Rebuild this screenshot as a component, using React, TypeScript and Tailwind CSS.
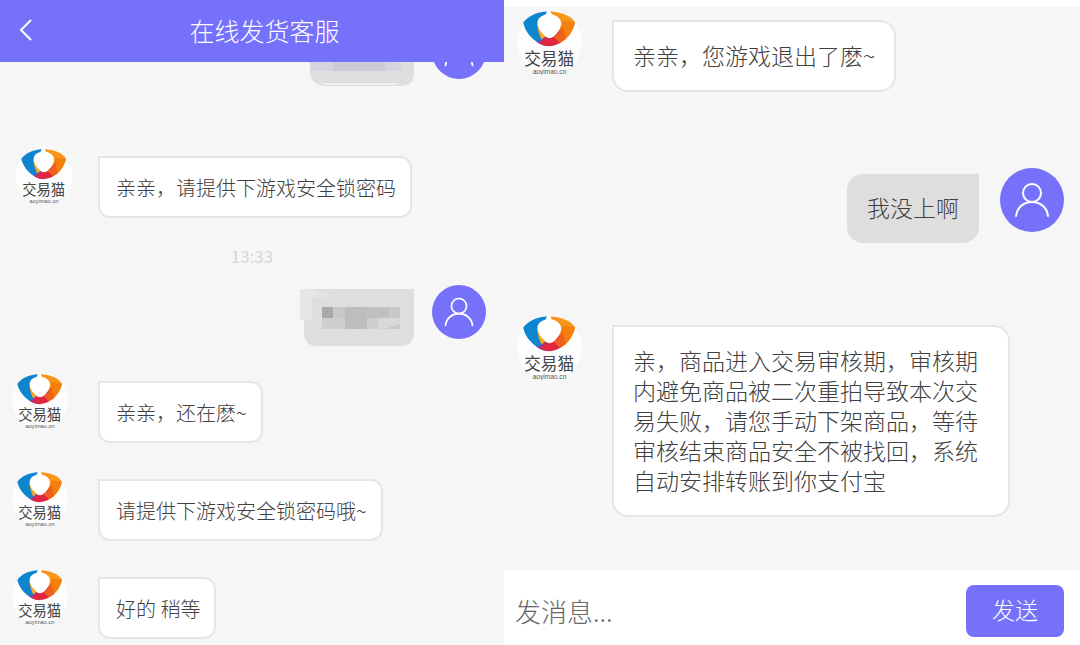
import type { ReactNode } from "react";

function CatLogo({ className }: { className: string }) {
  return (
    <svg viewBox="0 0 168 168" className={`shrink-0 ${className}`} role="img" aria-label="交易猫">
      <circle cx="84" cy="84" r="84" fill="#fdfdfd" />
      <path d="M78 4C50 5 27 17 16 33c6 24 22 44 46 55l14-16V10z" fill="#0d86cf" />
      <path d="M86 4c30 1 54 12 64 28-6 26-22 46-46 56L84 70V10z" fill="#f8961a" />
      <path d="M150 32c-4 18-13 33-26 45L104 66c10-12 15-24 14-38z" fill="#f57f0c" />
      <path d="M52 34c1 18 6 34 16 50l18-12z" fill="#f3a81f" />
      <path d="M50 82c8-1 15-6 24-14l12 26c-14 0-26-4-36-12z" fill="#8c3fa0" />
      <path d="M60 87c6-9 14-16 26-20 14-5 24-12 31-22 2 16 1 30-6 40-15 9-34 12-51 2z" fill="#e0263e" />
      <path d="M117 40c-4 14-11 23-22 30l16 15c6-3 11-6 15-10z" fill="#f0601d" />
      <path d="M79 2h6l5 9c15 4 24 12 24 24-1 13-9 26-21 35-6 4-12 4-17 0-14-11-23-24-23-37 0-11 8-18 20-21z" fill="#fff" />
      <text x="83" y="141" textAnchor="middle" fontSize="43" fill="#444" className="font-['Noto_Sans_CJK_SC',sans-serif] font-normal">交易猫</text>
      <text x="84" y="165" textAnchor="middle" fontSize="17" fill="#555" className="font-['Liberation_Sans',sans-serif] font-normal">aoyimao.cn</text>
    </svg>
  );
}

function UserAvatar({ className }: { className: string }) {
  return (
    <svg viewBox="0 0 64 64" className={`shrink-0 ${className}`} role="img" aria-label="用户">
      <circle cx="32" cy="32" r="32" fill="#7571fb" />
      <g fill="none" stroke="#fff" strokeWidth="2" strokeLinecap="round">
        <circle cx="32" cy="25" r="9" />
        <path d="M16 48c1-9 8-14 16-14s15 5 16 14" />
      </g>
    </svg>
  );
}

function SmallMessage({ children, first }: { children: ReactNode; first?: boolean }) {
  return (
    <div className={`flex items-start ${first ? "gap-[26px] pl-4" : "gap-[30px] pl-3"}`}>
      <CatLogo className="size-14" />
      <p className="mt-2 rounded-xl rounded-tl-none border-2 border-[#e6e6e6] bg-white pt-4 pr-[14px] pb-[14px] pl-4 text-[20px] leading-7">
        {children}
      </p>
    </div>
  );
}

function LargeMessage({ children }: { children: ReactNode }) {
  return (
    <div className="flex items-start gap-[30px] pl-[13px]">
      <CatLogo className="size-[65px]" />
      <p className="mt-[10px] max-w-[398px] rounded-2xl rounded-tl-none border-2 border-[#e6e6e6] bg-white px-[19px] pt-[18px] pb-5 text-[23px] leading-[30px]">
        {children}
      </p>
    </div>
  );
}

export default function App() {
  return (
    <main className="grid min-h-screen grid-cols-[7fr_8fr] bg-white font-['Noto_Sans_CJK_SC',sans-serif] font-light text-[#404040]">
      <section className="flex flex-col bg-[#f6f6f6]">
        <header className="z-10 grid h-[62px] grid-cols-[1fr_auto_1fr] items-center bg-[#7571fb] px-5 pb-[3px] text-white">
          <button type="button" aria-label="返回" className="justify-self-start">
            <svg viewBox="0 0 12 22" className="h-[22px] w-3" fill="none" stroke="#fff" strokeWidth="2">
              <path d="M11 1L1 11l10 10" />
            </svg>
          </button>
          <h1 className="pl-[25px] text-[25px] leading-8">在线发货客服</h1>
        </header>

        <div className="-mt-[37px] flex items-end justify-end gap-[18px] pr-[18px]">
          <svg viewBox="0 0 104 56" className="-mb-2 h-14 w-[104px]" aria-hidden="true">
            <path d="M0 0H104V42Q104 55 90 55H14Q0 53 0 40z" fill="#dedede" />
            <path d="M0 28H87L93 40H0z" fill="#d5d4e2" />
            <path d="M23 28H75V40H23z" fill="#cccbd9" />
            <path d="M10 52H90l-4 2H14z" fill="#efefef" />
          </svg>
          <UserAvatar className="size-[54px]" />
        </div>

        <div className="mt-[69px]">
          <SmallMessage first>亲亲，请提供下游戏安全锁密码</SmallMessage>
        </div>

        <time className="mt-[26px] text-center text-[17px] leading-6 font-normal text-[#d6d6d6]">13:33</time>

        <div className="mt-[17px] flex items-start justify-end gap-[18px] pr-[18px]">
          <svg viewBox="0 0 114 58" className="mt-1 h-[58px] w-[114px]" aria-hidden="true">
            <path d="M0 0H114V43Q114 57 101 57H17Q4 57 4 42V31H0z" fill="#dedede" />
            <path d="M0 0H12L32 7 12 9V31H0z" fill="#e6e6e6" />
            <path d="M22 18H100V40H22z" fill="#c9c9c9" />
            <path d="M22 18H33V29H22z" fill="#a9a9a9" />
            <path d="M45 18H67V40H45z" fill="#bdbdbd" />
            <path d="M67 18H89V29H67z" fill="#c0c0c0" />
            <path d="M22 29H45V40H22zM67 29H78V40H67z" fill="#cecece" />
            <path d="M78 29H100V35L84 40H78z" fill="#d8d8d8" />
          </svg>
          <UserAvatar className="size-[54px]" />
        </div>

        <div className="mt-[26px] flex flex-col gap-7">
          <SmallMessage>亲亲，还在麽~</SmallMessage>
          <SmallMessage>请提供下游戏安全锁密码哦~</SmallMessage>
          <SmallMessage>好的 稍等</SmallMessage>
        </div>
      </section>

      <section className="flex flex-col pt-[7px]">
        <div className="flex grow flex-col bg-[#f6f6f6] pt-[3px]">
          <LargeMessage>亲亲，您游戏退出了麽~</LargeMessage>

          <div className="mt-[76px] flex items-start justify-end gap-[21px] pr-4">
            <p className="mt-[6px] rounded-2xl rounded-tr-none bg-[#dedede] px-5 pt-[18px] pb-[21px] text-[23px] leading-[30px]">我没上啊</p>
            <UserAvatar className="size-16" />
          </div>

          <div className="mt-[72px]">
            <LargeMessage>
              亲，商品进入交易审核期，审核期内避免商品被二次重拍导致本次交易失败，请您手动下架商品，等待审核结束商品安全不被找回，系统自动安排转账到你支付宝
            </LargeMessage>
          </div>
        </div>

        <form className="flex h-[75px] items-center justify-between bg-white pt-[6px] pr-4 pl-[11px]" onSubmit={(e) => e.preventDefault()}>
          <input
            type="text"
            aria-label="发消息"
            placeholder="发消息..."
            className="min-w-0 grow bg-transparent text-[26px] leading-9 outline-none placeholder:text-[#666]"
          />
          <button type="submit" className="h-[52px] w-[98px] rounded-lg bg-[#7571fb] pb-[2px] text-[23px] text-white">
            发送
          </button>
        </form>
      </section>
    </main>
  );
}
